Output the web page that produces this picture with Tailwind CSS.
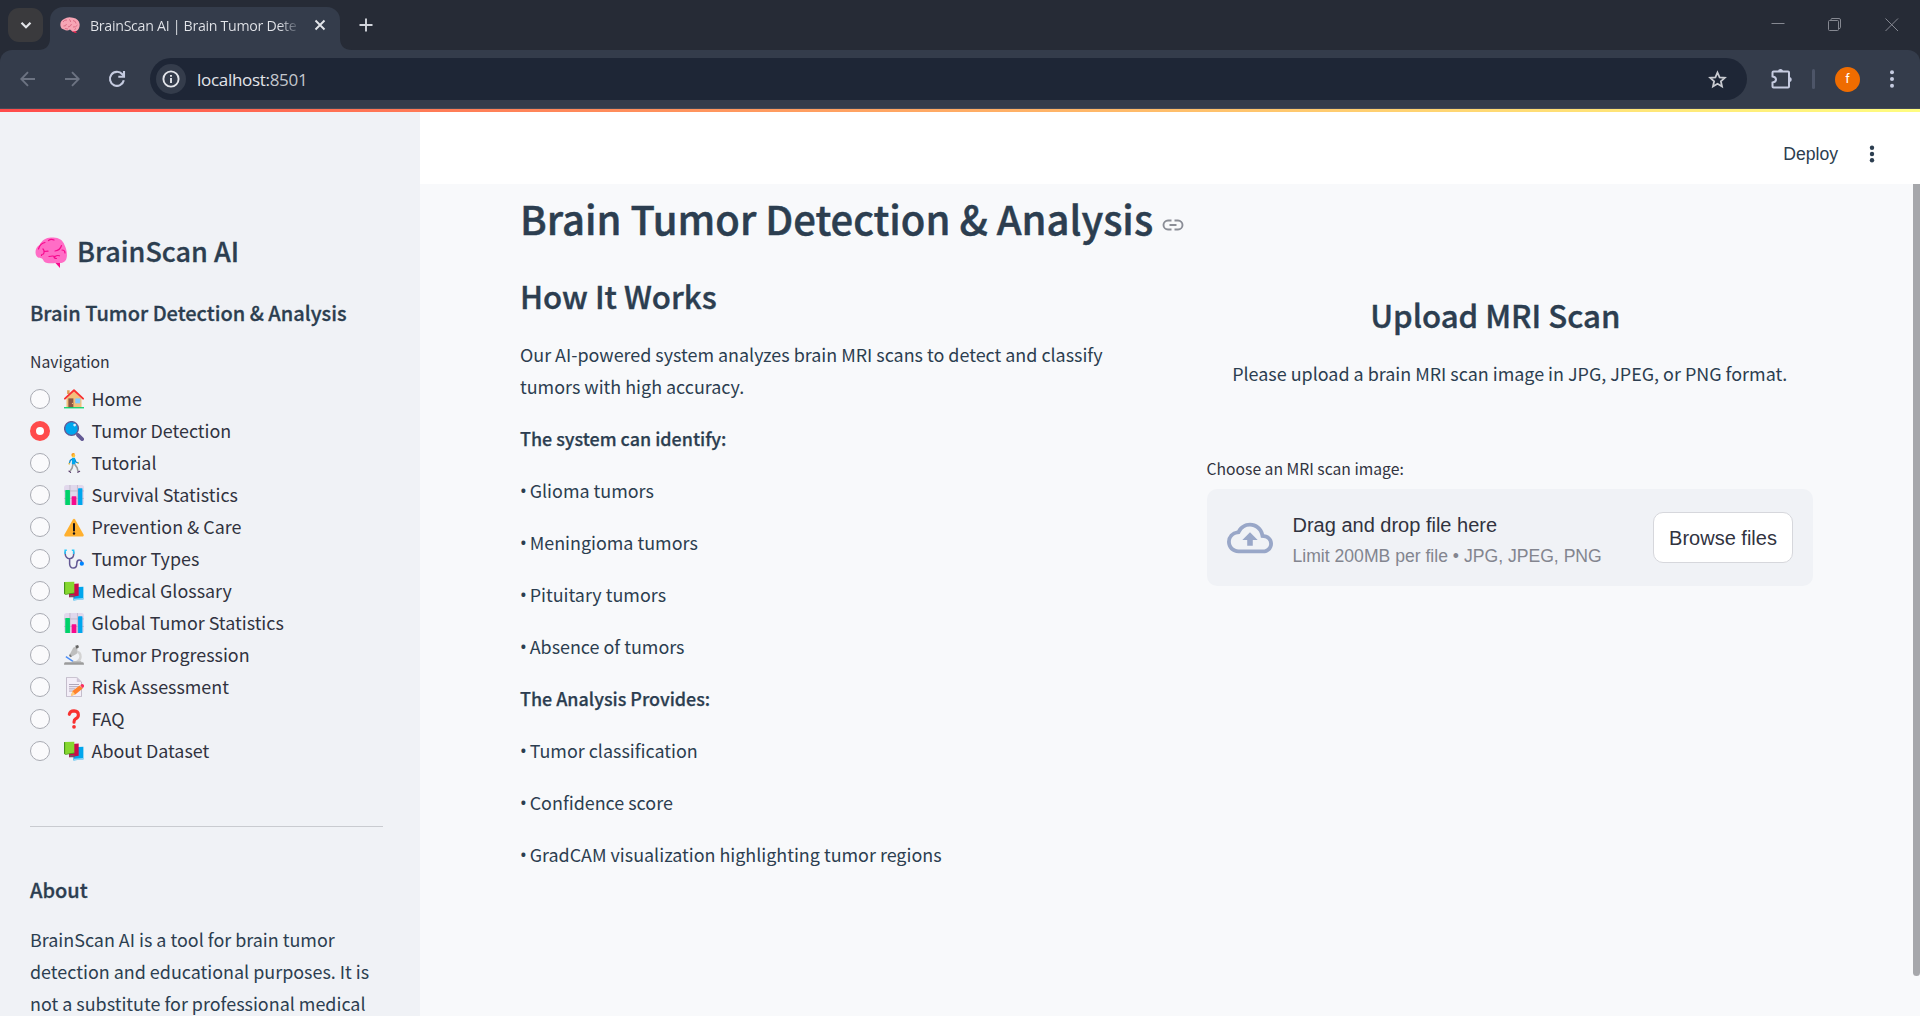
<!DOCTYPE html>
<html lang="en">
<head>
<meta charset="utf-8">
<title>BrainScan AI | Brain Tumor Detection</title>
<script src="https://cdn.jsdelivr.net/npm/@tailwindcss/browser@4"></script>
</head>
<body class="flex h-[1016px] w-[1920px] flex-col overflow-hidden bg-[#f8f9fb] font-['Noto_Sans_CJK_SC','Noto_Sans',sans-serif] text-[#2c3e50]">

<!-- Emoji shapes -->
<svg class="hidden">
  <symbol id="brain" viewBox="0 0 32 32">
    <path d="M20 25.500L25 31V25Z" fill="#f70a8d"/>
    <path d="M3 20.500C-1 18 0 10 4.500 8C7 3 12 0 17 .6C23 0 28 3 29.500 8C32 13 33 20 30.500 23.500C28 27 24 26 21 25.800C18 26.500 12 27 9 24.500C7.500 20.500 5 21 3 20.500Z" fill="#ff6dc6"/>
    <path d="M3.500 12Q5 6.500 10 5.500M13.500 3.500Q16 1.500 19 3M8 12Q10 14 8.500 17Q6.500 17 6.500 18.500M9 14.500L13 14.200M20 14Q25 13.500 26.500 8.500M27 13Q30 13 30 16M14 19.500Q18 18.500 20 19.500Q22 18 24.500 18.800M19 19.500Q19 21.500 21.500 21.500" fill="none" stroke="#f70a8d" stroke-width="1.200" stroke-linecap="round"/>
  </symbol>
  <symbol id="house" viewBox="0 0 32 32">
    <path d="M5 2H9V8H5Z" fill="#e39d54"/><path d="M4 15L16 4L28 15V30H4Z" fill="#f3c07b"/>
    <path d="M7 15H15V30H7Z" fill="#8b5544"/><circle cx="13.500" cy="23" r=".9" fill="#f3c07b"/>
    <path d="M18 15H26V23H18Z" fill="#83cbff"/>
    <path d="M1.500 15.500L16 2L30.500 15.500" fill="none" stroke="#f8312f" stroke-width="3" stroke-linejoin="round" stroke-linecap="round"/>
    <path d="M0 29H32V31H0Z" fill="#00d26a"/>
  </symbol>
  <symbol id="lens" viewBox="0 0 32 32">
    <path d="M19 19L24 24" stroke="#998ea4" stroke-width="3.500"/><path d="M22.500 22.500L29 29" stroke="#635994" stroke-width="6" stroke-linecap="round"/>
    <circle cx="12" cy="12" r="11" fill="#00a6ed" stroke="#635994" stroke-width="2.200"/><circle cx="17" cy="6.500" r="2.200" fill="#d3f0ff"/>
  </symbol>
  <symbol id="walker" viewBox="0 0 32 32">
    <path d="M14 9L10 12L8.500 17M17 9.500L19 14.500L23 16" fill="none" stroke="#0084ce" stroke-width="2" stroke-linecap="round"/>
    <path d="M8.300 17.500V16.500M23 16.200H22.500" stroke="#ffc83d" stroke-width="2.200" stroke-linecap="round"/>
    <path d="M14.500 17L13 24L9.500 29.500M17 18L21 23.500L22.500 29.500" fill="none" stroke="#9b9b9b" stroke-width="2.500" stroke-linejoin="round"/>
    <path d="M8 29L10.500 31M22 30.800L25 29.300" stroke="#533566" stroke-width="1.900" stroke-linecap="round"/>
    <path d="M13 7.500H17.500L18.300 18H12.500Z" fill="#00a6ed"/>
    <circle cx="15" cy="4" r="3" fill="#ffc83d"/><path d="M11.800 3Q12-.2 15.500 0Q17.500 .4 17.500 2L14.500 2.500L14 5Z" fill="#f59b23"/>
  </symbol>
  <symbol id="chart" viewBox="0 0 32 32">
    <rect width="32" height="32" rx="4" fill="#e1d8ec"/>
    <path d="M9.500 0V32M21.500 0V32M0 9.500H32M0 21.500H32" stroke="#b4acbc" stroke-width="1"/>
    <path d="M2 9Q2 8 3 8H8.500Q9.500 8 9.500 9V32H2Z" fill="#00d26a"/><path d="M12.200 19Q12.200 18 13.200 18H18.800Q19.800 18 19.800 19V32H12.200Z" fill="#f70a8d"/><path d="M22.500 6Q22.500 5 23.500 5H28.500Q29.500 5 29.500 6V32H22.500Z" fill="#00a6ed"/>
  </symbol>
  <symbol id="warning" viewBox="0 0 32 32">
    <path d="M14.300 4Q16 1.500 17.700 4L31.500 28.500Q32 31 30 31H2Q0 31 .5 28.500Z" fill="#ffb02e"/>
    <path d="M16 11V21.500" stroke="#141018" stroke-width="3.200" stroke-linecap="round"/><circle cx="16" cy="26.300" r="1.900" fill="#141018"/>
  </symbol>
  <symbol id="stetho" viewBox="0 0 32 32">
    <path d="M2 4V8Q2.500 15 9 15.500Q15.500 15 15.500 8V4M9 15.500V24Q9.500 30.500 15 30.500Q20.500 30 20.500 23Q20.500 17.500 24.500 17.500Q28 17.500 28.500 22" fill="none" stroke="#635994" stroke-width="2.400"/>
    <path d="M1.800 8V1.800H4.500M15.500 8V1.800H12.500" fill="none" stroke="#26c9fc" stroke-width="2.400"/><circle cx="28.500" cy="23.500" r="3.400" fill="#0084fe"/>
  </symbol>
  <symbol id="books" viewBox="0 0 32 32">
    <path d="M15 10L31 9V29L15 31Z" fill="#00a6ed"/><path d="M15 28.500L31 27V30.500H16Z" fill="#8fd3f5"/>
    <path d="M8 5L23.500 4V23.500L8 26Z" fill="#ca0b4a"/><path d="M8 22.500H17V26H9Z" fill="#7d4b66"/>
    <path d="M0 1.500L16.500 1V19L1.500 21.500L0 20Z" fill="#86d72f"/><path d="M0 1.500L1.800 2.500V21.500L0 20Z" fill="#44911b"/><path d="M1.500 21L16.500 18.500V20L2 22Z" fill="#44911b"/>
  </symbol>
  <symbol id="scope" viewBox="0 0 32 32">
    <path d="M17.500 10Q27 11 26.500 19Q26 25 20 27.500" fill="none" stroke="#d3d3d3" stroke-width="3.800"/>
    <path d="M15 4L22 2L20.500 14L13.500 18L9.500 14.500Z" fill="#bebebe"/><path d="M18 1L22.500 0L24 3.500L20 6Z" fill="#636363"/><path d="M9.500 14L13 18L10.500 19.500L8 17Z" fill="#7a7a7a"/>
    <path d="M3 18.500L15.500 27" stroke="#4a8df8" stroke-width="2.200"/>
    <path d="M14 25.500H27L28.500 28H13Z" fill="#bebebe"/><path d="M1.500 27.500H30.500Q32 28 32 31.500H0Q0 28 1.500 27.500Z" fill="#9b9b9b"/>
  </symbol>
  <symbol id="memo" viewBox="0 0 32 32">
    <path d="M4 .6H20.500L28 8V31.400H4Z" fill="#f3eef8" stroke="#b4acbc" stroke-width="1.200"/><path d="M20.500 .6V8H28Z" fill="#cdc4d6"/>
    <path d="M8 12H24M8 15.500H24M8 19H18M8 22.500H15" stroke="#998ea4" stroke-width="1.200"/>
    <path d="M13.500 22.500L25 13.500L30 18.500L18 28L11.500 30Z" fill="#ff822d"/><path d="M13.500 22.500L18 28L11 30.500Z" fill="#ffce7c"/><path d="M26 13L28.500 11.200Q30 10.500 31.500 12.500Q33 14.500 31.500 15.800L30 18Z" fill="#f92f60"/>
  </symbol>
  <symbol id="question" viewBox="0 0 32 32">
    <path d="M8.500 8.500Q9.500 3 16 3Q23 3.500 23 9.500Q23 13.500 18.500 15.800Q16 17.300 16 21" fill="none" stroke="#f8312f" stroke-width="5" stroke-linecap="round"/><circle cx="16" cy="28.500" r="3" fill="#f8312f"/>
  </symbol>
  <symbol id="favicon" viewBox="0 0 20 16">
    <path d="M13 12L17 15.500L15 16L11.500 14Z" fill="#e9244f"/>
    <path d="M.5 9Q-.3 4 4 2Q8-.8 13 .8Q19 2 19.600 7Q20 11.500 16.500 14L12.500 14.500L10 12.500Q7 14.500 4 12.500Q1 12 .5 9Z" fill="#f7a5b5"/>
    <path d="M3 5Q4.500 2.500 7 3M9 2.500Q11 3 10.500 5M3.500 9Q6 9.500 6.500 7M8 10Q11 9.500 11.500 7M13 3.500Q16 4 16 6.500M13 10Q16 10.500 17.500 8M5 11.500L8 12M14.500 12.500L16 11.500" fill="none" stroke="#dc6f87" stroke-width="1"/>
  </symbol>
</svg>

<!-- Tab strip -->
<header class="flex h-[50px] shrink-0 items-start bg-[#262b36] font-['Open_Sans',sans-serif] text-[#e3e5ea]">
  <div class="ml-2 mt-2 flex h-[34px] w-[35px] items-center justify-center rounded-[11px] bg-[#3a3a3d]">
    <svg class="size-[14px]" viewBox="0 0 14 14" fill="none" stroke="#e3e5ea" stroke-width="2.200"><path d="M2.500 4.700L7 9.200L11.500 4.700"/></svg>
  </div>
  <div class="relative ml-[7px] mt-[7px] flex h-[43px] w-[290px] items-center rounded-t-[13px] bg-[#343c4b] pb-[7px]">
    <svg class="absolute -left-3 bottom-0 size-3" viewBox="0 0 12 12"><path d="M12 0V12H0Q12 12 12 0Z" fill="#343c4b"/></svg>
    <svg class="absolute -right-3 bottom-0 size-3" viewBox="0 0 12 12"><path d="M0 0V12H12Q0 12 0 0Z" fill="#343c4b"/></svg>
    <svg class="ml-[10px] h-4 w-5"><use href="#favicon"/></svg>
    <span class="ml-[10px] w-[211px] bg-linear-to-r from-[#e3e5ea] from-90% to-[#343c4b] bg-clip-text pt-px text-[14.200px] leading-5 tracking-[-0.3px] whitespace-nowrap text-transparent">BrainScan AI | Brain Tumor Dete</span>
    <svg class="ml-[13px] size-3" viewBox="0 0 12 12" stroke="#e3e5ea" stroke-width="1.900"><path d="M1.500 1.500L10.500 10.500M10.500 1.500L1.500 10.500"/></svg>
  </div>
  <svg class="ml-[19px] mt-[18px] size-[14px]" viewBox="0 0 14 14" stroke="#d2d5dc" stroke-width="1.900"><path d="M7 .5V13.500M.5 7H13.500"/></svg>
  <div class="mt-[18px] mr-[21px] ml-auto flex gap-[43px]">
    <svg class="size-[14px]" viewBox="0 0 14 14" stroke="#858891"><path d="M.5 5.500H13.500"/></svg>
    <svg class="size-[14px]" viewBox="0 0 14 14" fill="none" stroke="#858891"><rect x=".5" y="2.500" width="10" height="10" rx="1"/><path d="M3 2.500V1.500Q3 .5 4 .5H11Q12.500 .5 12.500 2V9.500Q12.500 10.500 11 10.500"/></svg>
    <svg class="size-[14px]" viewBox="0 0 14 14" stroke="#858891"><path d="M.5 .5L13 13M13 .5L.5 13"/></svg>
  </div>
</header>

<!-- Toolbar -->
<div class="h-[59px] shrink-0 bg-[#262b36]">
  <div class="flex h-[59px] items-center rounded-t-[12px] border-b border-[#454a57] bg-[#343c4b]">
    <svg class="ml-5 size-4" viewBox="0 0 16 16" fill="none" stroke="#6c7382" stroke-width="1.900"><path d="M15 8H1.500M8 1.200L1.300 8L8 14.800"/></svg>
    <svg class="ml-[28px] size-4" viewBox="0 0 16 16" fill="none" stroke="#6c7382" stroke-width="1.900"><path d="M1 8H14.500M8 1.200L14.700 8L8 14.800"/></svg>
    <svg class="ml-[28px] size-[18px]" viewBox="0 0 18 18" fill="none" stroke="#c5cbe0" stroke-width="2.100"><path d="M15.800 10.300A7 7 0 1 1 14.300 4.300L15.800 6"/><path d="M16 1V6.800H10.300"/></svg>
    <div class="ml-6 flex h-[42px] w-[1597px] items-center rounded-full bg-[#1e2636]">
      <div class="ml-1.5 flex size-[30px] items-center justify-center rounded-full bg-[#343c4b]">
        <svg class="size-[18px]" viewBox="0 0 18 18" fill="none" stroke="#e3e5ea" stroke-width="1.900"><circle cx="9" cy="9" r="7.600"/><path d="M9 8V13M9 5V6.800"/></svg>
      </div>
      <span class="ml-[11px] pt-px font-['Open_Sans',sans-serif] text-[17px] leading-6 tracking-[-0.3px] text-[#e3e5ea]">localhost:<span class="text-[#c3c6cd]">8501</span></span>
      <svg class="ml-auto mr-5 size-[19px]" viewBox="0 0 19 19" fill="none" stroke="#c9cbd1" stroke-width="1.800" stroke-linejoin="miter"><path d="M9.500 2.500L11.600 7.300L16.800 7.800L12.900 11.300L14 16.500L9.500 13.800L5 16.500L6.100 11.300L2.200 7.800L7.400 7.300Z"/></svg>
    </div>
    <svg class="ml-6 size-[22px]" viewBox="0 0 22 22"><path d="M1.500 4.500Q1.500 3.500 2.500 3.500H17Q18 3.500 18 4.500V18.500Q18 19.500 17 19.500H2.500Q1.500 19.500 1.500 18.500V14.500Q5 14 5 11.500Q5 9 1.500 8.500Z" fill="none" stroke="#c5cbe0" stroke-width="2"/><path d="M7 3.500Q7 1 9.500 1Q12 1 12 3.500ZM18 9Q20.700 9 20.700 11.500Q20.700 14 18 14Z" fill="#c5cbe0"/></svg>
    <div class="ml-[19px] h-5 w-[3px] rounded-full bg-[#4d5568]"></div>
    <div class="ml-5 flex size-[25px] items-center justify-center rounded-full bg-[#ef6c00] font-['Roboto',sans-serif] text-[13px] text-white">f</div>
    <svg class="ml-[29px] h-[18px] w-[6px]" viewBox="0 0 6 18" fill="#c5cbe0"><circle cx="3" cy="2.200" r="2"/><circle cx="3" cy="9" r="2"/><circle cx="3" cy="15.800" r="2"/></svg>
  </div>
</div>
<div class="h-[3px] shrink-0 bg-linear-to-r from-[#ff4b4b] to-[#fffd80]"></div>

<div class="flex min-h-0 grow">
  <!-- Sidebar -->
  <aside class="w-[420px] shrink-0 overflow-hidden bg-[#f0f2f6] px-[30px] pt-[119px]">
    <h2 class="flex h-10 items-center pl-1 text-[27px] leading-10 font-medium whitespace-nowrap [-webkit-text-stroke:0.3px]"><svg class="mt-[3px] mr-[10px] ml-[1px] size-8"><use href="#brain"/></svg>BrainScan AI</h2>
    <h3 class="mt-[27px] text-[20px] leading-[30px] font-medium whitespace-nowrap [-webkit-text-stroke:0.3px]">Brain Tumor Detection &amp; Analysis</h3>
    <p class="mt-5 text-[15.800px] leading-7 text-[#31333f]">Navigation</p>
    <ul class="mt-[7px] text-[17.900px] leading-[30px] text-[#31333f]">
      <li class="flex h-8 items-center"><span class="size-5 rounded-full border border-[#a8aab2] bg-[#fafafc]"></span><svg class="mr-[7.500px] ml-[14px] size-5"><use href="#house"/></svg><span class="pb-0.5">Home</span></li>
      <li class="flex h-8 items-center"><span class="size-5 rounded-full border-[6px] border-[#ff4b4b] bg-white"></span><svg class="mr-[7.500px] ml-[14px] size-5"><use href="#lens"/></svg><span class="pb-0.5">Tumor Detection</span></li>
      <li class="flex h-8 items-center"><span class="size-5 rounded-full border border-[#a8aab2] bg-[#fafafc]"></span><svg class="mr-[7.500px] ml-[14px] size-5"><use href="#walker"/></svg><span class="pb-0.5">Tutorial</span></li>
      <li class="flex h-8 items-center"><span class="size-5 rounded-full border border-[#a8aab2] bg-[#fafafc]"></span><svg class="mr-[7.500px] ml-[14px] size-5"><use href="#chart"/></svg><span class="pb-0.5">Survival Statistics</span></li>
      <li class="flex h-8 items-center"><span class="size-5 rounded-full border border-[#a8aab2] bg-[#fafafc]"></span><svg class="mr-[7.500px] ml-[14px] size-5"><use href="#warning"/></svg><span class="pb-0.5">Prevention &amp; Care</span></li>
      <li class="flex h-8 items-center"><span class="size-5 rounded-full border border-[#a8aab2] bg-[#fafafc]"></span><svg class="mr-[7.500px] ml-[14px] size-5"><use href="#stetho"/></svg><span class="pb-0.5">Tumor Types</span></li>
      <li class="flex h-8 items-center"><span class="size-5 rounded-full border border-[#a8aab2] bg-[#fafafc]"></span><svg class="mr-[7.500px] ml-[14px] size-5"><use href="#books"/></svg><span class="pb-0.5">Medical Glossary</span></li>
      <li class="flex h-8 items-center"><span class="size-5 rounded-full border border-[#a8aab2] bg-[#fafafc]"></span><svg class="mr-[7.500px] ml-[14px] size-5"><use href="#chart"/></svg><span class="pb-0.5">Global Tumor Statistics</span></li>
      <li class="flex h-8 items-center"><span class="size-5 rounded-full border border-[#a8aab2] bg-[#fafafc]"></span><svg class="mr-[7.500px] ml-[14px] size-5"><use href="#scope"/></svg><span class="pb-0.5">Tumor Progression</span></li>
      <li class="flex h-8 items-center"><span class="size-5 rounded-full border border-[#a8aab2] bg-[#fafafc]"></span><svg class="mr-[7.500px] ml-[14px] size-5"><use href="#memo"/></svg><span class="pb-0.5">Risk Assessment</span></li>
      <li class="flex h-8 items-center"><span class="size-5 rounded-full border border-[#a8aab2] bg-[#fafafc]"></span><svg class="mr-[7.500px] ml-[14px] size-5"><use href="#question"/></svg><span class="pb-0.5">FAQ</span></li>
      <li class="flex h-8 items-center"><span class="size-5 rounded-full border border-[#a8aab2] bg-[#fafafc]"></span><svg class="mr-[7.500px] ml-[14px] size-5"><use href="#books"/></svg><span class="pb-0.5">About Dataset</span></li>
    </ul>
    <hr class="mt-[59px] w-[353px] border-[#c9cbd0]">
    <h3 class="mt-12 text-[20px] leading-[30px] font-medium [-webkit-text-stroke:0.3px]">About</h3>
    <p class="mt-[18px] text-[17.930px] leading-8 whitespace-nowrap">BrainScan AI is a tool for brain tumor<br>detection and educational purposes. It is<br>not a substitute for professional medical</p>
  </aside>

  <!-- Main -->
  <main class="flex min-w-0 grow flex-col">
    <div class="flex h-[72px] shrink-0 items-center justify-end bg-white pt-[12px] pr-[45px] font-['Liberation_Sans',Arial,sans-serif] text-[17.600px]">
      <span class="pt-px">Deploy</span>
      <svg class="ml-[31px] h-[18px] w-[6px]" viewBox="0 0 6 18"><g fill="#2c3e50"><circle cx="3" cy="2.700" r="2.200"/><circle cx="3" cy="9" r="2.200"/><circle cx="3" cy="15.300" r="2.200"/></g></svg>
    </div>
    <div class="flex min-h-0 grow">
      <div class="min-w-0 grow overflow-hidden pt-2 pr-[100px] pl-[100px]">
        <h1 class="flex items-center text-[40px] leading-[53px] font-medium whitespace-nowrap [-webkit-text-stroke:0.5px]">Brain Tumor Detection &amp; Analysis
          <svg class="mt-[13px] ml-[8px] size-6" viewBox="0 0 24 24" fill="none" stroke="#8a8d96" stroke-width="1.900"><path d="M10.500 7.500H7A4.300 4.300 0 0 0 7 16.500H10.500M13.500 7.500H17A4.300 4.300 0 0 1 17 16.500H13.500M8.500 12H15.500"/></svg>
        </h1>
        <div class="mt-8 grid grid-cols-2 gap-20">
          <section class="text-[17.920px] leading-8 whitespace-nowrap">
            <h2 class="mb-[23px] text-[31.200px] leading-[38px] font-medium [-webkit-text-stroke:0.4px]">How It Works</h2>
            <div class="flex flex-col gap-5">
              <p>Our AI-powered system analyzes brain MRI scans to detect and classify<br>tumors with high accuracy.</p>
              <p class="font-medium [-webkit-text-stroke:0.25px]">The system can identify:</p>
              <p class="flex"><span class="w-[9.700px] font-['Noto_Sans']">•</span>Glioma tumors</p>
              <p class="flex"><span class="w-[9.700px] font-['Noto_Sans']">•</span>Meningioma tumors</p>
              <p class="flex"><span class="w-[9.700px] font-['Noto_Sans']">•</span>Pituitary tumors</p>
              <p class="flex"><span class="w-[9.700px] font-['Noto_Sans']">•</span>Absence of tumors</p>
              <p class="font-medium [-webkit-text-stroke:0.25px]">The Analysis Provides:</p>
              <p class="flex"><span class="w-[9.700px] font-['Noto_Sans']">•</span>Tumor classification</p>
              <p class="flex"><span class="w-[9.700px] font-['Noto_Sans']">•</span>Confidence score</p>
              <p class="flex"><span class="w-[9.700px] font-['Noto_Sans']">•</span>GradCAM visualization highlighting tumor regions</p>
            </div>
          </section>
          <section class="pt-[19px]">
            <h2 class="pr-[29px] text-center text-[31.200px] leading-[38px] font-medium [-webkit-text-stroke:0.4px]">Upload MRI Scan</h2>
            <p class="mt-[23px] text-center text-[17.930px] leading-8">Please upload a brain MRI scan image in JPG, JPEG, or PNG format.</p>
            <p class="mt-[66px] text-[15.700px] leading-7 text-[#31333f]">Choose an MRI scan image:</p>
            <div class="mt-[6px] flex h-[97px] items-center rounded-[10px] bg-[#f0f2f6] px-5 font-['Liberation_Sans',Arial,sans-serif] text-[#31333f]">
              <svg class="size-[46px]" viewBox="0 0 24 24" fill="#99a7c8"><path d="M19.350 10.040A7.490 7.490 0 0 0 12 4C9.110 4 6.600 5.640 5.350 8.040A5.994 5.994 0 0 0 0 14c0 3.310 2.690 6 6 6h13c2.760 0 5-2.240 5-5 0-2.640-2.050-4.780-4.650-4.960zM19 18H6c-2.210 0-4-1.790-4-4 0-2.050 1.530-3.760 3.560-3.970l1.070-.11.5-.95A5.469 5.469 0 0 1 12 6c2.620 0 4.880 1.860 5.390 4.430l.3 1.500 1.530.11A2.980 2.980 0 0 1 22 15c0 1.650-1.350 3-3 3zM8 13h2.550v3h2.900v-3H16l-4-4-4 4z"/></svg>
              <div class="ml-5 flex flex-col pt-[3px]">
                <span class="text-[20px] leading-8">Drag and drop file here</span>
                <span class="pt-px text-[17.600px] leading-7 text-[#83858f]">Limit 200MB per file • JPG, JPEG, PNG</span>
              </div>
              <button class="ml-auto h-[51px] w-[140px] rounded-[10px] border border-[#d6d7dc] bg-white text-[20px]">Browse files</button>
            </div>
          </section>
        </div>
      </div>
      <div class="w-[7px] shrink-0"><div class="h-[792px] rounded-b bg-[#a6a7ab]"></div></div>
    </div>
  </main>
</div>
</body>
</html>
